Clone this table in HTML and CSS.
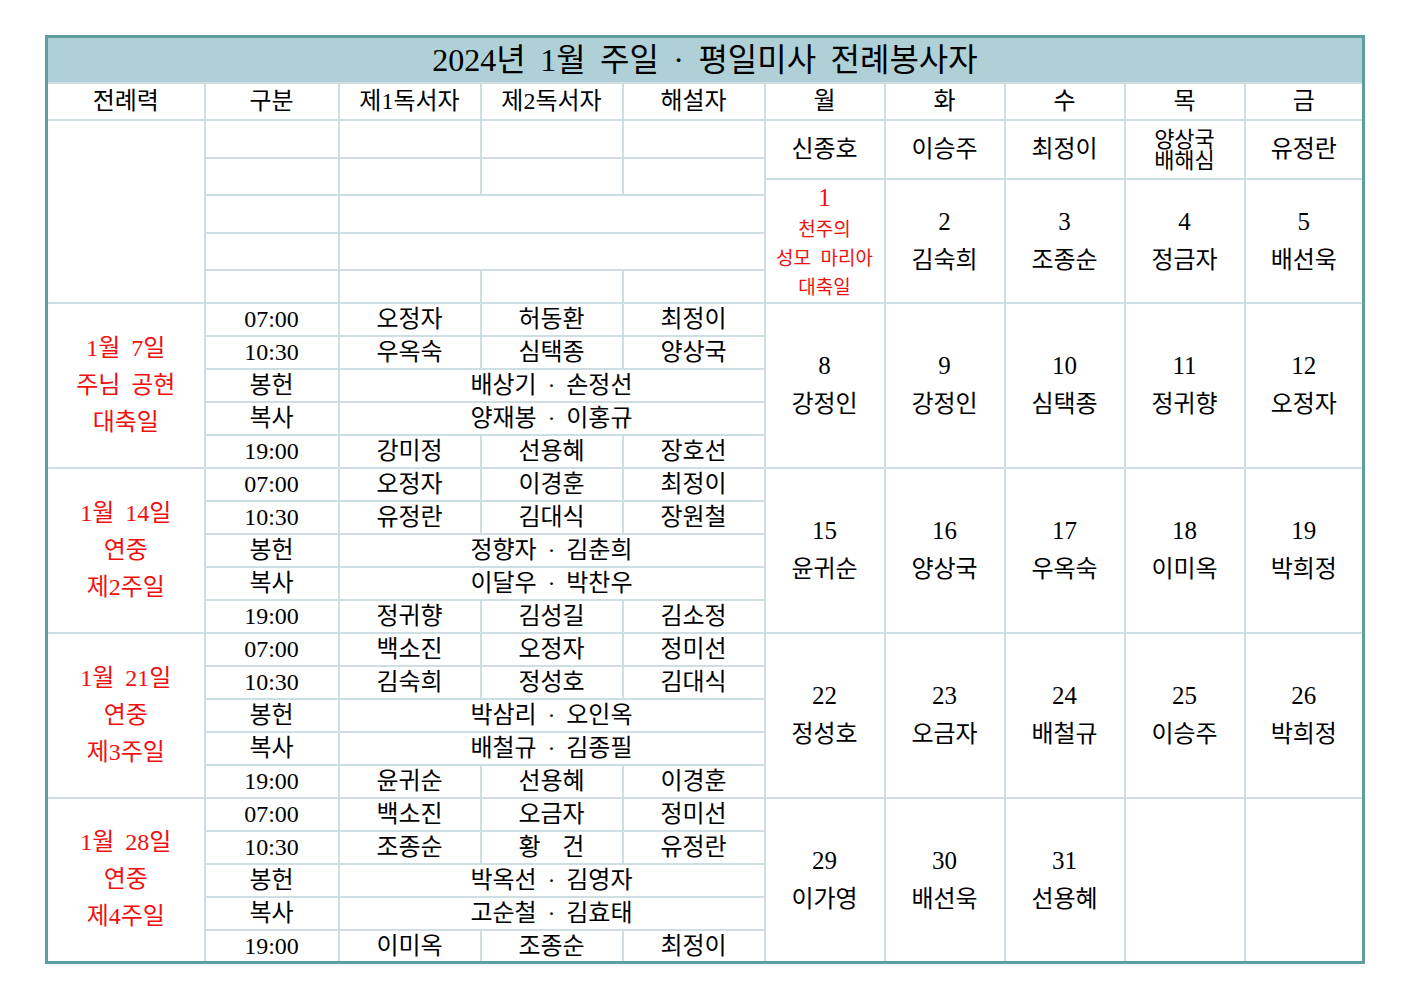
FILE: index.html
```html
<!DOCTYPE html>
<html lang="ko">
<head>
<meta charset="utf-8">
<title>2024년 1월 주일 · 평일미사 전례봉사자</title>
<link rel="stylesheet" href="styles.css">
</head>
<body>
<div class="page">
<table class="sched">
<colgroup>
<col class="c-lit"><col class="c-gu"><col class="c-rd"><col class="c-rd"><col class="c-rd">
<col class="c-wd"><col class="c-wd"><col class="c-wd"><col class="c-wd"><col class="c-last">
</colgroup>
<tr class="title"><td colspan="10">2024년 1월 주일 · 평일미사 전례봉사자</td></tr>
<tr class="head"><th>전례력</th><th>구분</th><th>제1독서자</th><th>제2독서자</th><th>해설자</th><th>월</th><th>화</th><th>수</th><th>목</th><th>금</th></tr>

<tr class="z1"><td rowspan="5"></td><td></td><td></td><td></td><td></td>
<td rowspan="5" class="wk0"><div class="nm">신종호</div><div class="dy red"><span class="n big">1</span><span class="sm">천주의</span><span class="sm">성모 마리아</span><span class="sm">대축일</span></div></td>
<td rowspan="5" class="wk0"><div class="nm">이승주</div><div class="dy"><span class="n">2</span><span class="nmx">김숙희</span></div></td>
<td rowspan="5" class="wk0"><div class="nm">최정이</div><div class="dy"><span class="n">3</span><span class="nmx">조종순</span></div></td>
<td rowspan="5" class="wk0"><div class="nm two"><span>양상국</span><span>배해심</span></div><div class="dy"><span class="n">4</span><span class="nmx">정금자</span></div></td>
<td rowspan="5" class="wk0"><div class="nm">유정란</div><div class="dy"><span class="n">5</span><span class="nmx">배선욱</span></div></td>
</tr>
<tr class="z2"><td></td><td></td><td></td><td></td></tr>
<tr class="z1"><td></td><td colspan="3"></td></tr>
<tr class="z2"><td></td><td colspan="3"></td></tr>
<tr class="z3"><td></td><td></td><td></td><td></td></tr>

<tr class="r"><td rowspan="5" class="lit">1월 7일<br>주님 공현<br>대축일</td><td class="t">07:00</td><td>오정자</td><td>허동환</td><td>최정이</td>
<td rowspan="5" class="wk"><span class="n">8</span><br>강정인</td>
<td rowspan="5" class="wk"><span class="n">9</span><br>강정인</td>
<td rowspan="5" class="wk"><span class="n">10</span><br>심택종</td>
<td rowspan="5" class="wk"><span class="n">11</span><br>정귀향</td>
<td rowspan="5" class="wk"><span class="n">12</span><br>오정자</td>
</tr>
<tr class="r"><td class="t">10:30</td><td>우옥숙</td><td>심택종</td><td>양상국</td></tr>
<tr class="r"><td>봉헌</td><td colspan="3">배상기 · 손정선</td></tr>
<tr class="r"><td>복사</td><td colspan="3">양재봉 · 이홍규</td></tr>
<tr class="r"><td class="t">19:00</td><td>강미정</td><td>선용혜</td><td>장호선</td></tr>

<tr class="r"><td rowspan="5" class="lit">1월 14일<br>연중<br>제2주일</td><td class="t">07:00</td><td>오정자</td><td>이경훈</td><td>최정이</td>
<td rowspan="5" class="wk"><span class="n">15</span><br>윤귀순</td>
<td rowspan="5" class="wk"><span class="n">16</span><br>양상국</td>
<td rowspan="5" class="wk"><span class="n">17</span><br>우옥숙</td>
<td rowspan="5" class="wk"><span class="n">18</span><br>이미옥</td>
<td rowspan="5" class="wk"><span class="n">19</span><br>박희정</td>
</tr>
<tr class="r"><td class="t">10:30</td><td>유정란</td><td>김대식</td><td>장원철</td></tr>
<tr class="r"><td>봉헌</td><td colspan="3">정향자 · 김춘희</td></tr>
<tr class="r"><td>복사</td><td colspan="3">이달우 · 박찬우</td></tr>
<tr class="r"><td class="t">19:00</td><td>정귀향</td><td>김성길</td><td>김소정</td></tr>

<tr class="r"><td rowspan="5" class="lit">1월 21일<br>연중<br>제3주일</td><td class="t">07:00</td><td>백소진</td><td>오정자</td><td>정미선</td>
<td rowspan="5" class="wk"><span class="n">22</span><br>정성호</td>
<td rowspan="5" class="wk"><span class="n">23</span><br>오금자</td>
<td rowspan="5" class="wk"><span class="n">24</span><br>배철규</td>
<td rowspan="5" class="wk"><span class="n">25</span><br>이승주</td>
<td rowspan="5" class="wk"><span class="n">26</span><br>박희정</td>
</tr>
<tr class="r"><td class="t">10:30</td><td>김숙희</td><td>정성호</td><td>김대식</td></tr>
<tr class="r"><td>봉헌</td><td colspan="3">박삼리 · 오인옥</td></tr>
<tr class="r"><td>복사</td><td colspan="3">배철규 · 김종필</td></tr>
<tr class="r"><td class="t">19:00</td><td>윤귀순</td><td>선용혜</td><td>이경훈</td></tr>

<tr class="r"><td rowspan="5" class="lit">1월 28일<br>연중<br>제4주일</td><td class="t">07:00</td><td>백소진</td><td>오금자</td><td>정미선</td>
<td rowspan="5" class="wk"><span class="n">29</span><br>이가영</td>
<td rowspan="5" class="wk"><span class="n">30</span><br>배선욱</td>
<td rowspan="5" class="wk"><span class="n">31</span><br>선용혜</td>
<td rowspan="5" class="wk"></td>
<td rowspan="5" class="wk"></td>
</tr>
<tr class="r"><td class="t">10:30</td><td>조종순</td><td>황 &nbsp;건</td><td>유정란</td></tr>
<tr class="r"><td>봉헌</td><td colspan="3">박옥선 · 김영자</td></tr>
<tr class="r"><td>복사</td><td colspan="3">고순철 · 김효태</td></tr>
<tr class="r"><td class="t">19:00</td><td>이미옥</td><td>조종순</td><td>최정이</td></tr>
</table>
</div>
</body>
</html>
```
FILE: styles.css
```css
html, body {
  margin: 0;
  background: #ffffff;
}
body {
  font-family: "Liberation Serif", "Noto Sans CJK KR", serif;
  color: #000000;
}
.page {
  padding: 35px 0 0 45px;
}
.sched {
  border-collapse: collapse;
  table-layout: fixed;
  width: 1317px;
  border: 3px solid #5e9da0;
}
.c-lit { width: 158px; }
.c-gu { width: 134px; }
.c-rd { width: 142px; }
.c-wd { width: 120px; }
.c-last { width: 119px; }

.sched td, .sched th {
  border: 2px solid #cfdee3;
  padding: 0;
  text-align: center;
  vertical-align: middle;
  font-size: 24px;
  font-weight: normal;
  line-height: 1;
  word-spacing: 0.2em;
  white-space: nowrap;
}
.title { height: 46px; }
.title td {
  background: #afd0d6;
  font-size: 32px;
}
.head { height: 37px; }
.z1 { height: 38px; }
.z2 { height: 37px; }
.z3 { height: 33px; }
.r { height: 33px; }

.t, .n { font-size: 25px; }

.lit {
  color: #f01010;
  line-height: 37px !important;
}
.wk {
  line-height: 38px !important;
}

.sched td.wk0 {
  vertical-align: top;
}
.nm {
  height: 57px;
  border-bottom: 2px solid #cfdee3;
  display: flex;
  flex-direction: column;
  align-items: center;
  justify-content: center;
}
.nm.two {
  font-size: 22px;
  line-height: 21px;
  padding-top: 2px;
  box-sizing: border-box;
  height: 59px;
}
.dy {
  height: 122px;
  display: flex;
  flex-direction: column;
  align-items: center;
  justify-content: center;
}
.dy .n, .dy .nmx {
  line-height: 38px;
}
.red { color: #f01010; }
.dy .n.big { line-height: 35px; }
.dy .sm {
  font-size: 19px;
  line-height: 29px;
}
```
